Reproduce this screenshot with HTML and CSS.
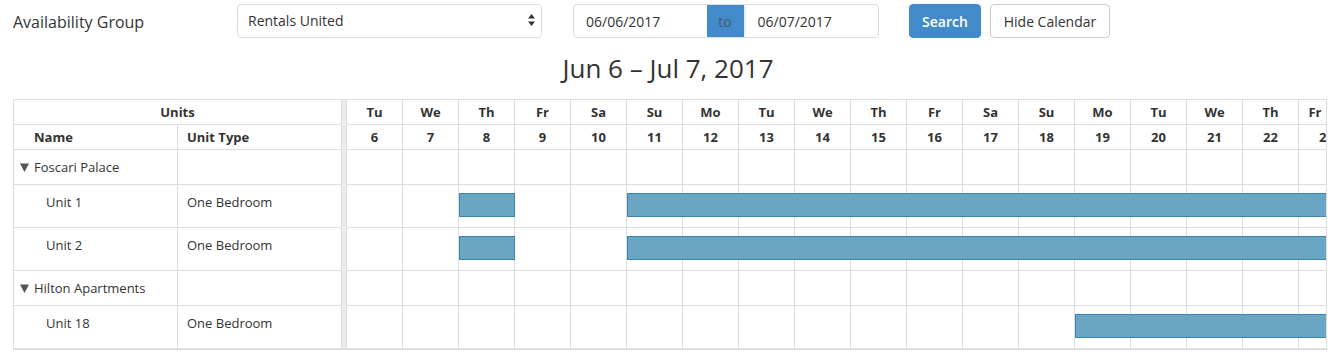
FILE: index.html
```html
<!DOCTYPE html>
<html>
<head>
<meta charset="utf-8">
<link rel="stylesheet" href="styles.css">
</head>
<body>
<div class="toolbar">
  <div class="label">Availability Group</div>
  <div class="select">
    <span>Rentals United</span>
    <svg class="caret" width="7" height="12" viewBox="0 0 7 12"><path d="M3.5 0 L7 4.5 H0 Z M3.5 12 L7 7.5 H0 Z" fill="#333"/></svg>
  </div>
  <div class="daterange">
    <div class="date">06/06/2017</div>
    <div class="to">to</div>
    <div class="date">06/07/2017</div>
  </div>
  <button class="btn primary">Search</button>
  <button class="btn">Hide Calendar</button>
</div>
<h2 class="title">Jun 6 – Jul 7, 2017</h2>
<div class="scheduler">
  <div class="units">
    <div class="row head"><div class="c full">Units</div></div>
    <div class="row head"><div class="c name">Name</div><div class="c type">Unit Type</div></div>
    <div class="row group"><div class="c name"><svg class="tri" width="9" height="9" viewBox="0 0 9 9"><path d="M0 0.5 H9 L4.5 9 Z" fill="#555"/></svg>Foscari Palace</div><div class="c type"></div></div>
    <div class="row unit"><div class="c name unitname">Unit 1</div><div class="c type">One Bedroom</div></div>
    <div class="row unit"><div class="c name unitname">Unit 2</div><div class="c type">One Bedroom</div></div>
    <div class="row group"><div class="c name"><svg class="tri" width="9" height="9" viewBox="0 0 9 9"><path d="M0 0.5 H9 L4.5 9 Z" fill="#555"/></svg>Hilton Apartments</div><div class="c type"></div></div>
    <div class="row unit last"><div class="c name unitname">Unit 18</div><div class="c type">One Bedroom</div></div>
  </div>
  <div class="divider"></div>
  <div class="timeline">
    <div class="row head" id="dow"></div>
    <div class="row head" id="dom"></div>
    <div class="row group tl"></div>
    <div class="row unit tl"><div class="bar" style="left:112px;width:56px"></div><div class="bar" style="left:280px;width:1512px"></div></div>
    <div class="row unit tl"><div class="bar" style="left:112px;width:56px"></div><div class="bar" style="left:280px;width:1512px"></div></div>
    <div class="row group tl"></div>
    <div class="row unit tl last"><div class="bar" style="left:728px;width:1064px"></div></div>
  </div>
</div>
<script src="script.js"></script>
</body>
</html>
```

FILE: styles.css
```css
* { box-sizing: border-box; }
body {
  margin: 0;
  font-family: "Open Sans", "Liberation Sans", sans-serif;
  color: #333;
  background: #fff;
}
.toolbar {
  display: flex;
  align-items: center;
  margin: 4px 0 0 13px;
  height: 34px;
}
.label {
  width: 224px;
  font-size: 16px;
  padding-top: 2px;
}
.select {
  width: 305px;
  height: 34px;
  border: 1px solid #ddd;
  border-radius: 4px;
  display: flex;
  align-items: center;
  justify-content: space-between;
  padding: 0 6px 2px 10px;
  font-size: 14px;
}
.daterange {
  margin-left: 31px;
  width: 306px;
  height: 34px;
  display: flex;
  border: 1px solid #ddd;
  border-radius: 4px;
  overflow: hidden;
  font-size: 14px;
}
.date {
  flex: 1;
  display: flex;
  align-items: center;
  padding-left: 12px;
}
.to {
  width: 39px;
  background: #428bca;
  color: #4a5866;
  display: flex;
  align-items: center;
  justify-content: center;
  border-right: 2px solid #eee;
}
.btn {
  height: 34px;
  border: 1px solid #ccc;
  border-radius: 4px;
  background: #fff;
  font-family: inherit;
  font-size: 14px;
  color: #333;
  margin-left: 9px;
  padding: 0 12px;
  width: 120px;
}
.btn.primary {
  margin-left: 30px;
  width: 72px;
  background: #428bca;
  border-color: #428bca;
  color: #fff;
  font-weight: 600;
}
.title {
  margin: 15px 0 15px;
  text-align: center;
  font-size: 26px;
  font-weight: 400;
  line-height: 31px;
  padding-left: 2px;
}
.scheduler {
  margin-left: 13px;
  width: 1314px;
  border: 1px solid #ddd;
  border-bottom-width: 2px;
  display: flex;
  font-size: 13px;
}
.units { width: 327px; flex: none; }
.divider {
  width: 6px;
  flex: none;
  background: #ebebeb;
  border-left: 1px solid #ddd;
  border-right: 1px solid #ddd;
}
.timeline { flex: 1; overflow: hidden; }
.row {
  display: flex;
  border-bottom: 1px solid #ddd;
  position: relative;
}
.row.head { height: 25px; font-weight: 700; }
.row.group { height: 35px; }
.row.unit { height: 43px; }
.row.last { border-bottom: none; height: 42px; }
.c {
  display: flex;
  align-items: center;
}
.unit .c { padding-bottom: 8px; }
.full { width: 100%; justify-content: center; }
.name { width: 164px; border-right: 1px solid #ddd; padding-left: 6px; }
.head .name { padding-left: 20px; }
.unit .name { padding-left: 32px; }
.type { width: 163px; padding-left: 9px; }
.tri { margin-right: 5px; margin-top: 1px; }
.cell {
  flex: none;
  width: 56px;
  border-right: 1px solid #ddd;
  display: flex;
  align-items: center;
  justify-content: center;
}
.cell.clip { width: 33px; }
.bar {
  position: absolute;
  top: 8px;
  height: 24px;
  background: #6aa5c3;
  border: 1px solid #3a86ad;
}
```

FILE: script.js
```js
(function () {
  var dows = ['Su', 'Mo', 'Tu', 'We', 'Th', 'Fr', 'Sa'];
  var dow = document.getElementById('dow');
  var dom = document.getElementById('dom');
  var rows = document.querySelectorAll('.timeline .tl');
  var n = 18;
  for (var i = 0; i < n; i++) {
    var d = new Date(2017, 5, 6 + i);
    var a = document.createElement('div');
    a.className = i === n - 1 ? 'cell clip' : 'cell';
    a.textContent = dows[d.getDay()];
    dow.appendChild(a);
    var b = document.createElement('div');
    b.className = 'cell';
    b.textContent = d.getDate();
    dom.appendChild(b);
    for (var r = 0; r < rows.length; r++) {
      var c = document.createElement('div');
      c.className = 'cell';
      rows[r].insertBefore(c, rows[r].firstChild);
    }
  }
})();
```
